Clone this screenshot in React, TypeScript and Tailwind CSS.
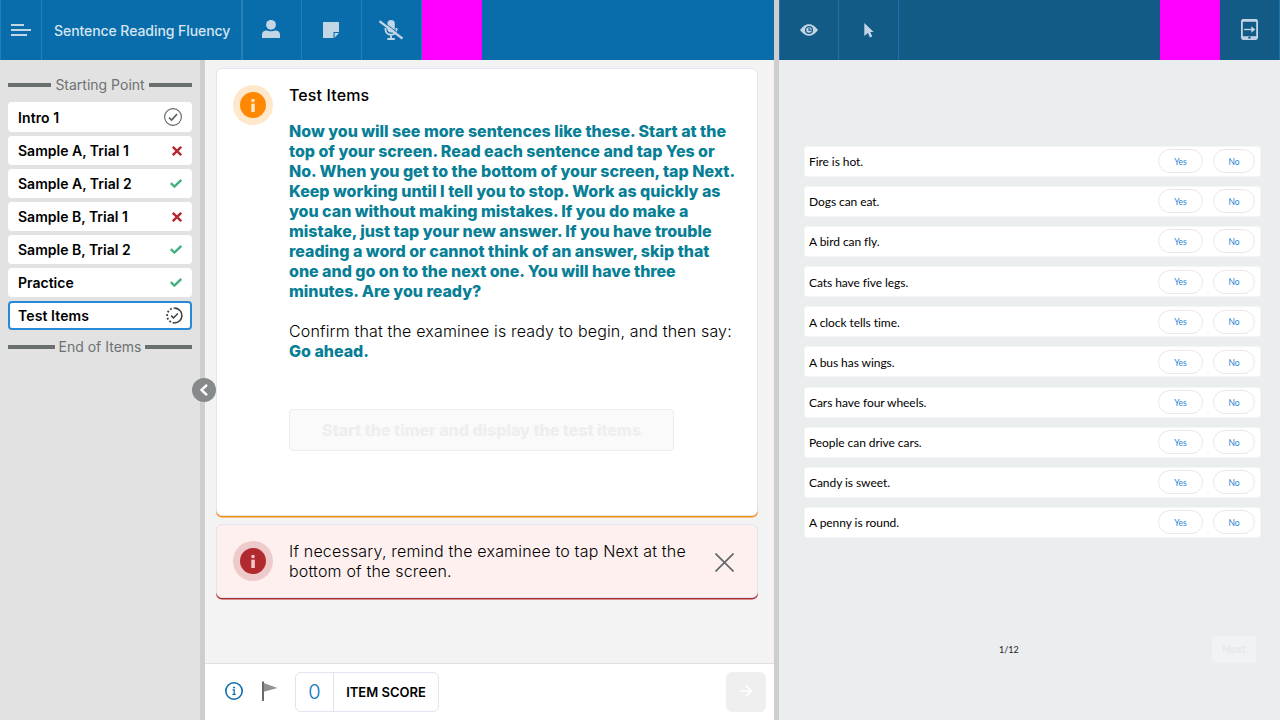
import React from "react";

const items: { label: string; status: "done" | "wrong" | "right" | "active" }[] = [
  { label: "Intro 1", status: "done" },
  { label: "Sample A, Trial 1", status: "wrong" },
  { label: "Sample A, Trial 2", status: "right" },
  { label: "Sample B, Trial 1", status: "wrong" },
  { label: "Sample B, Trial 2", status: "right" },
  { label: "Practice", status: "right" },
  { label: "Test Items", status: "active" },
];

const script = [
  "Now you will see more sentences like these. Start at the",
  "top of your screen. Read each sentence and tap Yes or",
  "No. When you get to the bottom of your screen, tap Next.",
  "Keep working until I tell you to stop. Work as quickly as",
  "you can without making mistakes. If you do make a",
  "mistake, just tap your new answer. If you have trouble",
  "reading a word or cannot think of an answer, skip that",
  "one and go on to the next one. You will have three",
  "minutes. Are you ready?",
];

const sentences = [
  "Fire is hot.",
  "Dogs can eat.",
  "A bird can fly.",
  "Cats have five legs.",
  "A clock tells time.",
  "A bus has wings.",
  "Cars have four wheels.",
  "People can drive cars.",
  "Candy is sweet.",
  "A penny is round.",
];

function StatusIcon({ status }: { status: string }) {
  if (status === "done")
    return (
      <svg className="-mt-[2px]" width="18" height="18" viewBox="0 0 18 18" fill="none" stroke="#5f6666">
        <circle cx="9" cy="9" r="8.4" strokeWidth="1.1" />
        <path d="M5 9.6 7.6 12 13 6.2" strokeWidth="1.7" />
      </svg>
    );
  if (status === "wrong")
    return (
      <svg className="mt-px" width="10" height="10" viewBox="0 0 10 10" stroke="#b12a2e" strokeWidth="2.4">
        <path d="M.8.8l8.4 8.4M9.2.8.8 9.2" />
      </svg>
    );
  if (status === "right")
    return (
      <svg width="12" height="9" viewBox="0 0 12 9" fill="none" stroke="#42b07f" strokeWidth="2.4">
        <path d="M.8 4.1 4.4 7.5 11.3.9" />
      </svg>
    );
  return (
    <svg width="17" height="17" viewBox="0 0 17 17" fill="none" stroke="#3c4043">
      <path d="M8.5 1.1a7.4 7.4 0 0 1 0 14.8" strokeWidth="1.6" />
      <path d="M8.5 15.9a7.4 7.4 0 0 1 0-14.8" strokeWidth="1.8" strokeDasharray="1.8 1.9" />
      <path d="M5.1 8.6 7.5 10.9 11.8 6.5" strokeWidth="1.5" />
    </svg>
  );
}

function Marker({ text }: { text: string }) {
  return (
    <div className="flex h-5 items-center gap-1 text-[14px] leading-5 whitespace-nowrap text-[#6d7272]">
      <span className="h-1 flex-1 bg-[#6a6f6f]" />
      <span>{text}</span>
      <span className="h-1 flex-1 bg-[#6a6f6f]" />
    </div>
  );
}

function InfoBadge({ outer, inner, glyph }: { outer: string; inner: string; glyph: string }) {
  return (
    <svg className="shrink-0" width="40" height="40" viewBox="0 0 40 40">
      <circle cx="20" cy="20" r="20" fill={outer} />
      <circle cx="20" cy="20" r="13" fill={inner} />
      <circle cx="20" cy="15.5" r="1.8" fill={glyph} />
      <rect x="18.3" y="18.7" width="3.5" height="8.3" fill={glyph} />
    </svg>
  );
}

function Toolbar() {
  return (
    <header className="flex h-[60px] shrink-0 bg-[#0a6dab] text-[#c3d6e5]">
      <button className="flex w-[42px] items-center border-x border-[#2680b8] pl-[10px]">
        <svg width="20" height="12" viewBox="0 0 20 12" fill="currentColor">
          <path d="M0 0h13v2H0zM0 5h20v2H0zM0 10h16v2H0z" />
        </svg>
      </button>
      <div className="flex w-[201px] items-center border-r-2 border-[#2680b8] pt-px pl-3 text-[14px] font-medium tracking-[-0.07px] whitespace-nowrap text-[#d5e5f1]">
        Sentence Reading Fluency
      </div>
      <button className="flex w-[59px] items-center justify-center border-r border-[#2680b8] pr-[2px]">
        <svg className="-mt-[2px]" width="18" height="18" viewBox="0 0 18 18" fill="currentColor">
          <circle cx="9" cy="4.8" r="4.9" />
          <path d="M0 18v-3.200C0 11.800 2.300 10.600 5 10.600c1.500.900 6.500.900 8 0 2.700 0 5 1.200 5 4.200V18z" />
        </svg>
      </button>
      <button className="flex w-[60px] items-center justify-center border-r border-[#2680b8] pr-[2px]">
        <svg width="16" height="16" viewBox="0 0 16 16" fill="currentColor">
          <path d="M.5 0h15q.5 0 .5.500V10h-5.500v6H.5Q0 16 0 15.500V.5Q0 0 .5 0zM11.600 11.100H16L11.600 15.800z" />
        </svg>
      </button>
      <button className="flex w-[60px] items-center justify-center border-r border-[#2680b8] pr-[2px]">
        <svg width="24" height="20" viewBox="0 0 24 20" fill="none" stroke="currentColor">
          <rect x="8.400" y="0" width="7.400" height="12.500" rx="3.700" fill="currentColor" stroke="none" />
          <path d="M6.500 8v1.500c0 3 2.300 5.300 5.500 5.300s5.500-2.300 5.500-5.300V8M12 15v3.500M8.300 19h7.500" strokeWidth="1.900" />
          <path d="M1.700-.1 24.500 17.200" stroke="#0a6dab" strokeWidth="1" />
          <path d="M.5 1.200 23.500 18.600" strokeWidth="2.300" />
        </svg>
      </button>
      <div className="w-[60px] bg-[#ff00ff]" />
    </header>
  );
}

function Sidebar() {
  return (
    <aside className="relative flex w-[205px] shrink-0 flex-col border-r-[5px] border-[#cecece] bg-[#e2e2e2] px-2 pt-[15px]">
      <Marker text="Starting Point" />
      <div className="mt-[7px] mb-[7px] flex flex-col gap-1">
        {items.map((it) => (
          <div
            key={it.label}
            className={
              it.status === "active"
                ? "flex h-[29px] items-center justify-between rounded border-2 border-[#2789d8] bg-white pr-[7px] pl-2 text-[14px] font-semibold tracking-[0.1px] text-black"
                : it.status === "done"
                  ? "flex h-[30px] items-center justify-between rounded bg-white px-[10px] pt-px text-[14px] font-semibold tracking-[0.1px] text-black"
                  : "flex h-[29px] items-center justify-between rounded bg-white px-[10px] text-[14px] font-semibold text-black"
            }
          >
            <span>{it.label}</span>
            <StatusIcon status={it.status} />
          </div>
        ))}
      </div>
      <Marker text="End of Items" />
      <button className="absolute top-[318px] left-[192px] z-10 flex size-6 items-center justify-center rounded-full bg-[#868a8a]">
        <svg width="8" height="12" viewBox="0 0 8 12" fill="none" stroke="white" strokeWidth="2.400">
          <path d="M7 .8 1.600 6 7 11.200" />
        </svg>
      </button>
    </aside>
  );
}

function Examiner() {
  return (
    <section className="flex w-[774px] shrink-0 flex-col">
      <Toolbar />
      <div className="flex min-h-0 flex-1">
        <Sidebar />
        <main className="flex flex-1 flex-col bg-[#f3f3f3]">
          <div className="flex flex-1 flex-col gap-2 pt-2 pr-4 pl-[11px] text-[16px] leading-5 text-black">
            <article className="flex h-[448px] gap-4 rounded-md border border-[#e2e6f0] bg-white px-4 pt-4 shadow-[0_1.5px_0_#f88d0d]">
              <InfoBadge outer="#ffe7cc" inner="#ff8800" glyph="#ffe7cc" />
              <div className="whitespace-nowrap">
                <h1 className="font-medium tracking-[0.12px]">Test Items</h1>
                <div className="mt-4 font-extrabold tracking-[-0.02px] text-[#087f96]">
                  {script.map((l) => (
                    <div key={l}>{l}</div>
                  ))}
                </div>
                <p className="mt-5 font-light tracking-[0.165px]">Confirm that the examinee is ready to begin, and then say:</p>
                <p className="font-extrabold tracking-[-0.02px] text-[#087f96]">Go ahead.</p>
                <button className="mt-[48px] h-[42px] w-[385px] rounded-sm border border-[#ededed] bg-[#fafafa] font-extrabold tracking-[-0.02px] text-[#eeeeee]">
                  Start the timer and display the test items
                </button>
              </div>
            </article>
            <article className="flex h-[74px] items-start gap-4 rounded-md border border-[#e2e6f0] bg-[#fff0f0] px-4 pt-4 shadow-[0_1.5px_0_#b12a2e]">
              <InfoBadge outer="#eecacb" inner="#b12a2e" glyph="#eecacb" />
              <p className="w-[410px] font-light tracking-[0.19px] whitespace-nowrap">
                If necessary, remind the examinee to tap Next at the
                <br />
                bottom of the screen.
              </p>
              <svg className="mt-3" width="19" height="19" viewBox="0 0 19 19" stroke="#5f6666" strokeWidth="1.600">
                <path d="M.5.5l18 18M18.500.5l-18 18" />
              </svg>
            </article>
          </div>
          <footer className="flex h-[57px] shrink-0 items-center border-t border-[#e0e0e0] bg-white pr-2 pl-5">
            <svg className="-mt-[2px]" width="18" height="18" viewBox="0 0 18 18" fill="none" stroke="#0a6dab">
              <circle cx="9" cy="9" r="8.200" strokeWidth="1.600" />
              <path d="M7.600 7.900h1.600v4M7.400 12.300h3.300" strokeWidth="1.200" />
              <circle cx="9.100" cy="5.600" r="1" fill="#0a6dab" stroke="none" />
            </svg>
            <svg className="-mt-[2px] ml-[18px]" width="17" height="20" viewBox="0 0 17 20">
              <path d="M2 1.800 16.500 7 2 11z" fill="#929292" />
              <path d="M1 .5h2V20H1z" fill="#666b6b" />
            </svg>
            <div className="ml-[17px] flex h-10 w-[144px] rounded-md border border-[#e2e4f0] text-black">
              <div className="flex w-[38px] items-center justify-center border-r border-[#e2e4f0] text-[20px] font-light text-[#0a74bd]">0</div>
              <div className="flex flex-1 items-center justify-center pt-[2px] text-[13px] font-semibold whitespace-nowrap">ITEM SCORE</div>
            </div>
            <button className="ml-auto flex size-10 items-center justify-center rounded-md bg-[#efefef]">
              <svg className="-mt-[2px]" width="12" height="12" viewBox="0 0 12 12" fill="none" stroke="white" strokeWidth="1.700">
                <path d="M0 6h11M5.700.5 11.200 6l-5.500 5.500" />
              </svg>
            </button>
          </footer>
        </main>
      </div>
    </section>
  );
}

function Examinee() {
  return (
    <section className="flex min-w-0 flex-1 flex-col bg-[#eaeeef]">
      <header className="flex h-[60px] shrink-0 bg-[#125b87] text-[#c3d4e5]">
        <button className="flex w-[60px] items-center justify-center border-x border-[#1c74ae]">
          <svg className="-mt-px" width="18" height="12" viewBox="0 0 18 12">
            <path d="M0 6C3.500 1.800 6 .2 9 .2S14.500 1.800 18 6c-3.500 4.200-6 5.800-9 5.800S3.500 10.200 0 6z" fill="currentColor" />
            <circle cx="9" cy="6" r="3.400" fill="none" stroke="#125b87" strokeWidth="1.300" />
            <path d="M9 3.800v2.400h2.400" fill="none" stroke="#125b87" strokeWidth="1.200" />
          </svg>
        </button>
        <button className="flex w-[60px] items-center justify-center border-r border-[#1c74ae]">
          <svg width="10" height="15" viewBox="0 0 10 15" fill="currentColor">
            <path d="M.3 0 9.700 9H6.300l2 4.400L5.900 14.500 3.900 10.100.3 13z" />
          </svg>
        </button>
        <div className="ml-auto w-[60px] bg-[#ff00ff]" />
        <button className="flex w-[60px] items-center justify-center border-r border-[#1c74ae]">
          <svg className="-mt-px" width="17" height="21" viewBox="0 0 17 21" fill="none" stroke="currentColor">
            <rect x=".9" y=".9" width="15.200" height="19.200" rx="1.500" strokeWidth="1.800" />
            <path d="M1 18.500h15M1 1.500h15" strokeWidth="2.600" />
            <path d="M3 10.500h8" strokeWidth="1.300" />
            <path d="M10.300 7.300 14.300 10.500l-4 3.200z" fill="currentColor" stroke="none" />
            <circle cx="8.500" cy="18.600" r="1.200" fill="#125b87" stroke="none" />
          </svg>
        </button>
      </header>
      <div className="flex flex-col gap-[9.15px] pt-[85.700px] pr-[19px] pl-[25px] font-['Lato',sans-serif]">
        {sentences.map((s) => (
          <div key={s} className="flex h-[31px] items-center rounded-[3px] border border-[#f4f6f6] bg-white pr-[5px] pl-1">
            <span className="flex-1 pt-[2px] text-[12px] tracking-[-0.06px] text-black">{s}</span>
            <span className="mr-[10px] flex h-[24px] w-[45px] items-center justify-center rounded-full border border-[#e9e9eb] pt-[2px] text-[8.500px] text-[#1f83d5]">Yes</span>
            <span className="flex h-[24px] w-[42px] items-center justify-center rounded-full border border-[#e9e9eb] pt-[2px] text-[8.500px] text-[#1f83d5]">No</span>
          </div>
        ))}
      </div>
      <div className="mt-[98px] flex items-center pr-6 font-['Lato',sans-serif]">
        <span className="ml-[220px] pt-[2px] text-[9px] leading-4 text-[#222]">1/12</span>
        <span className="ml-auto flex h-[27px] w-11 items-center justify-center rounded-[3px] bg-[#f0f2f3] text-[11px] font-bold text-[#e7e9ea]">Next</span>
      </div>
    </section>
  );
}

export default function App() {
  return (
    <div className="flex h-[720px] w-[1280px] overflow-hidden font-['Inter',sans-serif]">
      <Examiner />
      <div className="w-[5px] shrink-0 bg-[#cecece]" />
      <Examinee />
    </div>
  );
}
